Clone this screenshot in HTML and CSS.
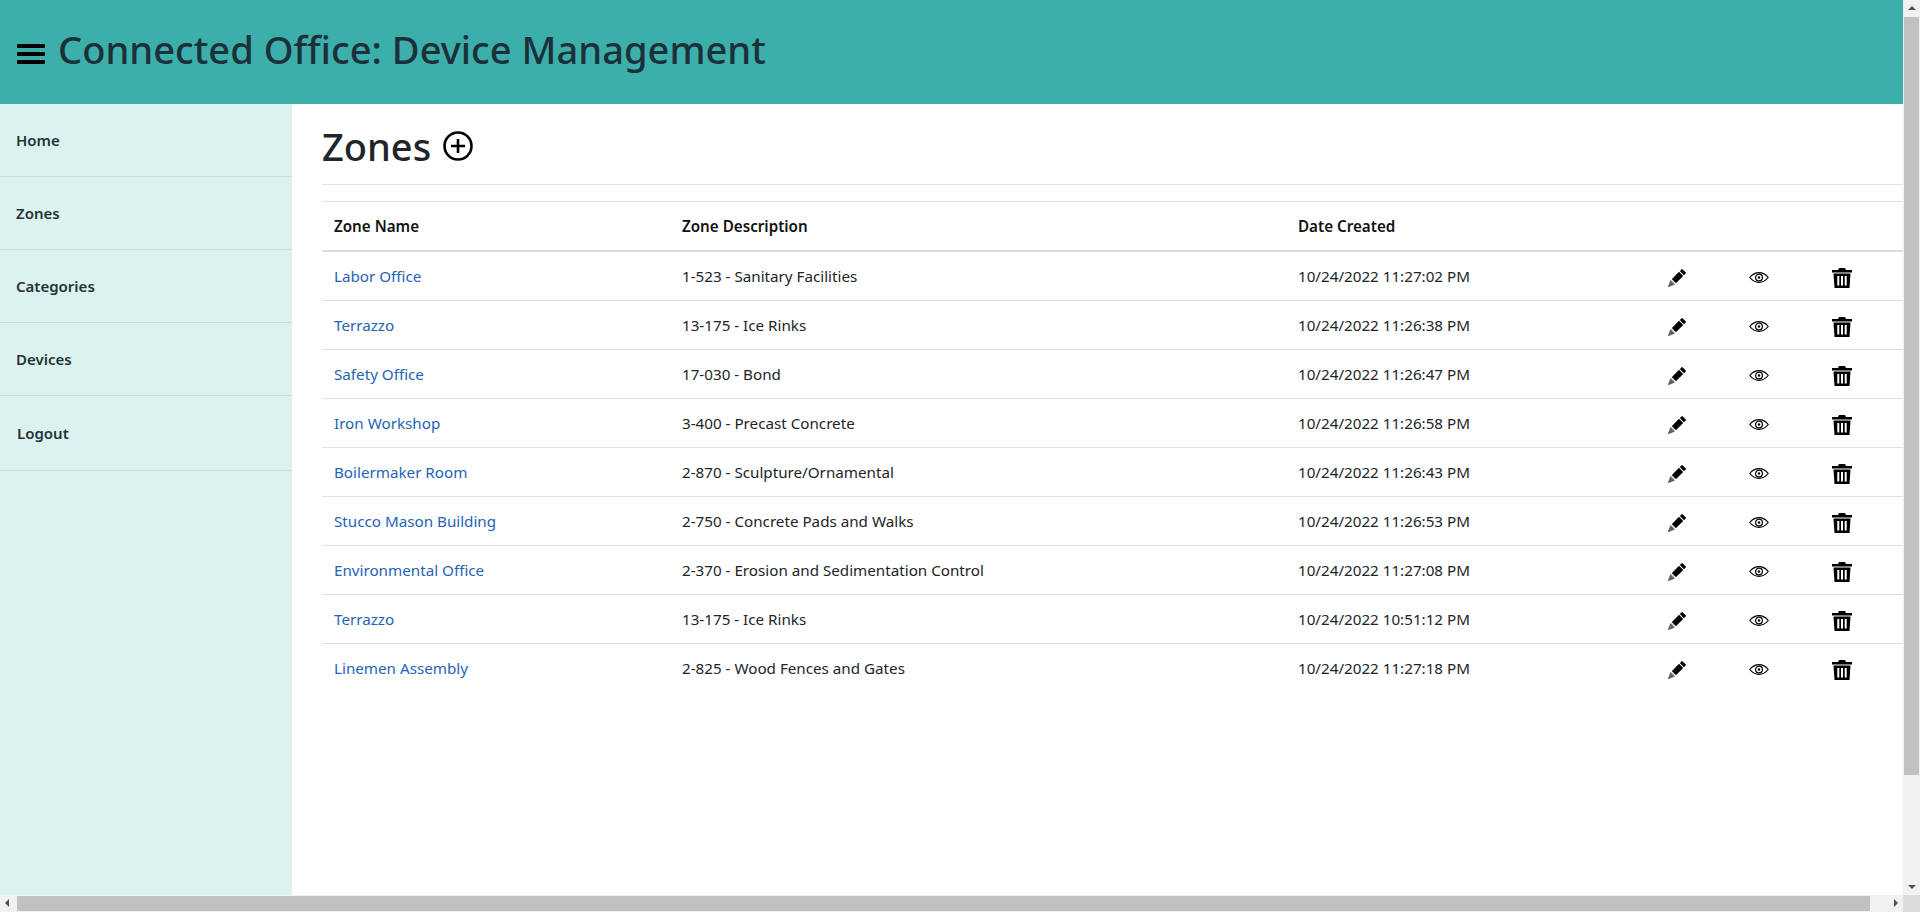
FILE: index.html
```html
<!DOCTYPE html>
<html lang="en">
<head>
    <meta charset="UTF-8">
    <meta name="viewport" content="width=device-width, initial-scale=1.0">
    <title>Connected Office: Device Management</title>
    <link rel="stylesheet" href="styles.css">
</head>
<body>
<svg class="sprite" width="0" height="0">
    <symbol id="i-pencil" viewBox="0 0 16 16">
        <path d="M12.854.146a.5.5 0 0 0-.707 0L10.5 1.793 14.207 5.5l1.647-1.646a.5.5 0 0 0 0-.708l-3-3zm.646 6.061L9.793 2.5 3.293 9H3.5a.5.5 0 0 1 .5.5v.5h.5a.5.5 0 0 1 .5.5v.5h.5a.5.5 0 0 1 .5.5v.5h.5a.5.5 0 0 1 .5.5v.207l6.5-6.5z"/>
        <path d="M6.032 13.675A.5.5 0 0 1 6 13.5V13h-.5a.5.5 0 0 1-.5-.5V12h-.5a.5.5 0 0 1-.5-.5V11h-.5a.5.5 0 0 1-.5-.5V10h-.5a.499.499 0 0 1-.175-.032l-.179.178a.5.5 0 0 0-.11.168l-2 5a.5.5 0 0 0 .65.65l5-2a.5.5 0 0 0 .168-.11l.178-.178z" opacity=".62"/>
    </symbol>
    <symbol id="i-eye" viewBox="0 0 20 11">
        <path d="M.8 5.500C3.500 2.100 6.600.7 10 .7s6.500 1.400 9.200 4.800c-2.700 3.400-5.800 4.800-9.200 4.800S3.500 8.900.8 5.500z" fill="none" stroke="currentColor" stroke-width="1.200"/>
        <circle cx="10" cy="5.500" r="3.400" fill="none" stroke="currentColor" stroke-width="1.200"/>
        <circle cx="10" cy="5.500" r="1.200"/>
    </symbol>
    <symbol id="i-trash" viewBox="0 0 20 20">
        <path fill-rule="evenodd" d="M7 0h6l1 2h6v2.500H0V2h6zM1.500 5.500h17L17.500 20h-15zm3.800 2.500v9.500h2V8zm3.700 0v9.500h2V8zm3.700 0v9.500h2V8z"/>
    </symbol>
</svg>
<div class="window">
    <div class="page">
        <header class="topbar">
            <span class="burger"><i></i><i></i><i></i></span>
            <span class="brand">Connected Office: Device Management</span>
        </header>
        <div class="content">
            <nav class="sidebar">
                <a href="#" class="nav-item">Home</a>
                <a href="#" class="nav-item">Zones</a>
                <a href="#" class="nav-item">Categories</a>
                <a href="#" class="nav-item">Devices</a>
                <a href="#" class="nav-item nav-logout">Logout</a>
            </nav>
            <main class="main">
                <h1 class="page-title">Zones
                    <svg class="add-icon" viewBox="0 0 30 30">
                        <circle cx="15" cy="15" r="13.500" fill="none" stroke="currentColor" stroke-width="2.600"/>
                        <path d="M15 8v14M8 15h14" stroke="currentColor" stroke-width="2.600"/>
                    </svg>
                </h1>
                <hr class="rule">
                <table class="zones">
                    <colgroup>
                        <col class="c-name"><col class="c-desc"><col class="c-date"><col class="c-edit"><col class="c-view"><col>
                    </colgroup>
                    <thead>
                        <tr><th>Zone Name</th><th>Zone Description</th><th>Date Created</th><th></th><th></th><th></th></tr>
                    </thead>
                    <tbody>
                        <tr><td><a href="#">Labor Office</a></td><td>1-523 - Sanitary Facilities</td><td>10/24/2022 11:27:02 PM</td>
                            <td><svg class="pencil"><use href="#i-pencil"/></svg></td><td><svg class="eye"><use href="#i-eye"/></svg></td><td><svg class="trash"><use href="#i-trash"/></svg></td></tr>
                        <tr><td><a href="#">Terrazzo</a></td><td>13-175 - Ice Rinks</td><td>10/24/2022 11:26:38 PM</td>
                            <td><svg class="pencil"><use href="#i-pencil"/></svg></td><td><svg class="eye"><use href="#i-eye"/></svg></td><td><svg class="trash"><use href="#i-trash"/></svg></td></tr>
                        <tr><td><a href="#">Safety Office</a></td><td>17-030 - Bond</td><td>10/24/2022 11:26:47 PM</td>
                            <td><svg class="pencil"><use href="#i-pencil"/></svg></td><td><svg class="eye"><use href="#i-eye"/></svg></td><td><svg class="trash"><use href="#i-trash"/></svg></td></tr>
                        <tr><td><a href="#">Iron Workshop</a></td><td>3-400 - Precast Concrete</td><td>10/24/2022 11:26:58 PM</td>
                            <td><svg class="pencil"><use href="#i-pencil"/></svg></td><td><svg class="eye"><use href="#i-eye"/></svg></td><td><svg class="trash"><use href="#i-trash"/></svg></td></tr>
                        <tr><td><a href="#">Boilermaker Room</a></td><td>2-870 - Sculpture/Ornamental</td><td>10/24/2022 11:26:43 PM</td>
                            <td><svg class="pencil"><use href="#i-pencil"/></svg></td><td><svg class="eye"><use href="#i-eye"/></svg></td><td><svg class="trash"><use href="#i-trash"/></svg></td></tr>
                        <tr><td><a href="#">Stucco Mason Building</a></td><td>2-750 - Concrete Pads and Walks</td><td>10/24/2022 11:26:53 PM</td>
                            <td><svg class="pencil"><use href="#i-pencil"/></svg></td><td><svg class="eye"><use href="#i-eye"/></svg></td><td><svg class="trash"><use href="#i-trash"/></svg></td></tr>
                        <tr><td><a href="#">Environmental Office</a></td><td>2-370 - Erosion and Sedimentation Control</td><td>10/24/2022 11:27:08 PM</td>
                            <td><svg class="pencil"><use href="#i-pencil"/></svg></td><td><svg class="eye"><use href="#i-eye"/></svg></td><td><svg class="trash"><use href="#i-trash"/></svg></td></tr>
                        <tr><td><a href="#">Terrazzo</a></td><td>13-175 - Ice Rinks</td><td>10/24/2022 10:51:12 PM</td>
                            <td><svg class="pencil"><use href="#i-pencil"/></svg></td><td><svg class="eye"><use href="#i-eye"/></svg></td><td><svg class="trash"><use href="#i-trash"/></svg></td></tr>
                        <tr class="last"><td><a href="#">Linemen Assembly</a></td><td>2-825 - Wood Fences and Gates</td><td>10/24/2022 11:27:18 PM</td>
                            <td><svg class="pencil"><use href="#i-pencil"/></svg></td><td><svg class="eye"><use href="#i-eye"/></svg></td><td><svg class="trash"><use href="#i-trash"/></svg></td></tr>
                    </tbody>
                </table>
            </main>
        </div>
    </div>
    <div class="vscroll">
        <span class="arrow arrow-up"></span>
        <span class="vthumb"></span>
        <span class="arrow arrow-down"></span>
    </div>
</div>
<div class="hscroll">
    <span class="arrow arrow-left"></span>
    <span class="hthumb"></span>
    <span class="arrow arrow-right"></span>
    <span class="corner"></span>
</div>
</body>
</html>
```

FILE: styles.css
```css
html, body {
    height: 100%;
}
body {
    margin: 0;
    font-family: "Noto Sans", "Open Sans", Arial, sans-serif;
    font-size: 15.2px;
    color: #212529;
    background: #fff;
    display: flex;
    flex-direction: column;
    overflow: hidden;
}
.sprite {
    display: none;
}
.window {
    flex: 1;
    display: flex;
    min-height: 0;
}
.page {
    flex: 1;
    min-width: 0;
    display: flex;
    flex-direction: column;
}
.topbar {
    height: 104px;
    background: #3cafaa;
    display: flex;
    align-items: center;
    padding-left: 17px;
    gap: 13px;
}
.burger {
    width: 28px;
    display: flex;
    flex-direction: column;
    gap: 3.500px;
    margin-top: 4px;
}
.burger i {
    display: block;
    height: 4.500px;
    background: #000;
    border-radius: 1px;
}
.brand {
    font-size: 38.1px;
    font-weight: 500;
    color: #1c303a;
    padding-bottom: 6px;
}
.content {
    flex: 1;
    display: flex;
    min-height: 0;
}
.sidebar {
    width: 292px;
    background: #dcf2ee;
    display: flex;
    flex-direction: column;
}
.nav-item {
    height: 72px;
    padding-left: 16px;
    display: flex;
    align-items: center;
    border-bottom: 1px solid #c8dedb;
    color: #263238;
    font-size: 15px;
    font-weight: 600;
    text-decoration: none;
}
.nav-logout {
    height: 74px;
    padding-left: 17px;
}
.main {
    flex: 1;
    min-width: 0;
    padding-left: 30px;
}
.page-title {
    margin: 0;
    height: 77px;
    padding-top: 3px;
    display: flex;
    align-items: center;
    gap: 12px;
    font-size: 38px;
    font-weight: 500;
    color: #212529;
}
.add-icon {
    width: 30px;
    height: 30px;
    color: #000;
}
.rule {
    margin: 0 0 16px;
    border: 0;
    border-top: 1px solid #e2e3e5;
}
.zones {
    width: 100%;
    table-layout: fixed;
    border-collapse: collapse;
    border-top: 1px solid #dee2e6;
}
.c-name { width: 348px; }
.c-desc { width: 616px; }
.c-date { width: 370px; }
.c-edit { width: 81px; }
.c-view { width: 83px; }
.zones th {
    height: 48px;
    padding: 0 12px;
    text-align: left;
    font-weight: 600;
    color: #111;
    border-bottom: 2px solid #dcdcdc;
}
.zones td {
    height: 48px;
    padding: 0 12px;
    border-bottom: 1px solid #dee2e6;
    color: #212529;
}
.zones .last td {
    border-bottom: 0;
}
.zones a {
    color: #2563b8;
    text-decoration: none;
}
.zones svg {
    display: block;
    color: #000;
    fill: currentColor;
    margin-top: 3px;
}
.pencil {
    width: 18px;
    height: 18px;
}
.eye {
    width: 20px;
    height: 11px;
}
.trash {
    width: 20px;
    height: 20px;
}
.vscroll {
    width: 17px;
    background: #f1f1f1;
    display: flex;
    flex-direction: column;
    align-items: center;
}
.vthumb {
    flex: 0 0 758px;
    width: 15px;
    background: #c1c1c1;
}
.arrow {
    flex: none;
    width: 17px;
    height: 17px;
    position: relative;
}
.arrow::after {
    content: "";
    position: absolute;
    left: 5px;
    top: 5px;
    border: 4px solid transparent;
}
.arrow-up::after {
    top: 2px;
    border-bottom-color: #505050;
}
.arrow-down {
    margin-top: auto;
}
.arrow-down::after {
    top: 7px;
    border-top-color: #505050;
}
.arrow-left::after {
    left: 1px;
    top: 4px;
    border-right-color: #505050;
}
.arrow-right::after {
    left: 8px;
    top: 4px;
    border-left-color: #505050;
}
.hscroll {
    height: 17px;
    background: #f1f1f1;
    display: flex;
    align-items: center;
}
.hthumb {
    flex: 0 0 1853px;
    height: 15px;
    background: #c1c1c1;
}
.arrow-right {
    margin-left: auto;
}
.corner {
    width: 17px;
    height: 17px;
    background: #dcdcdc;
}
```
